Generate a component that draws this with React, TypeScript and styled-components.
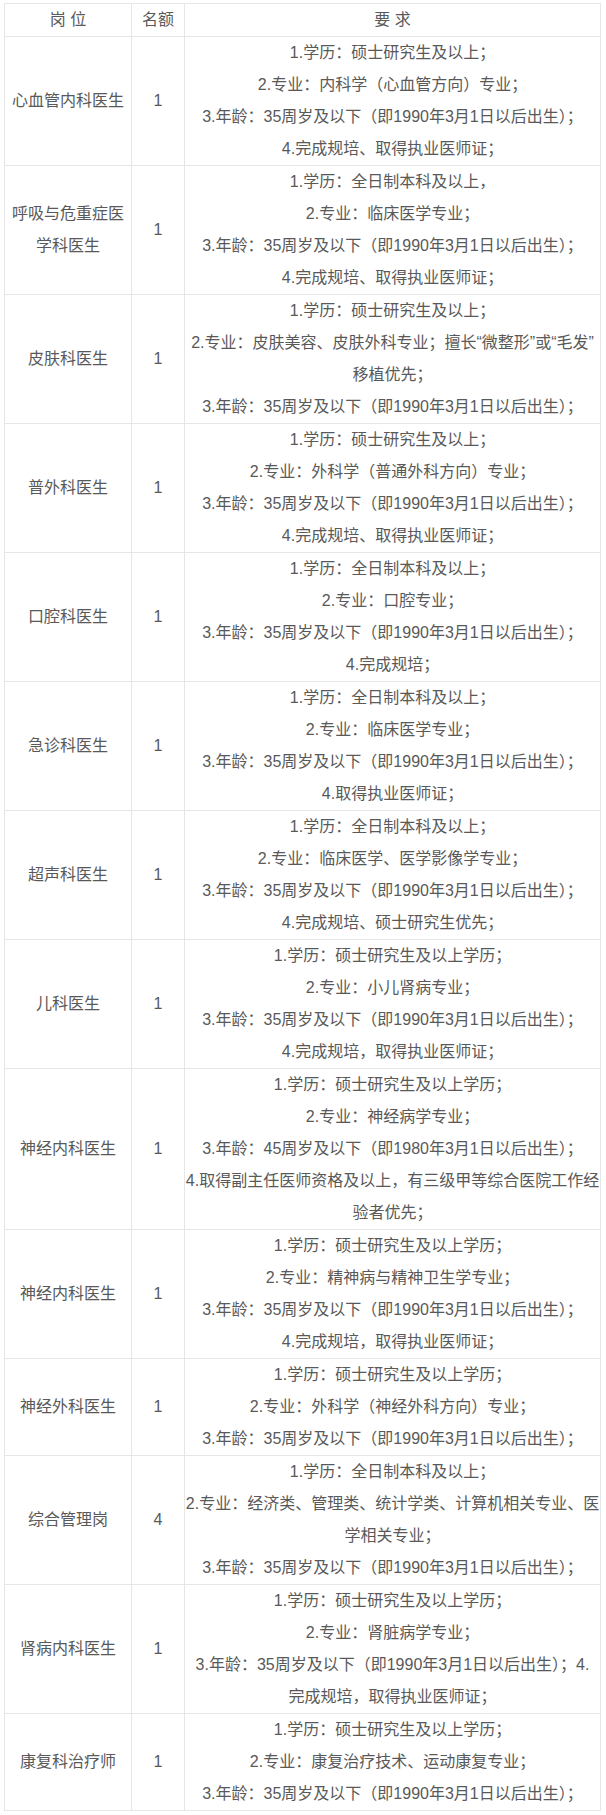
import React from "react";
import styled, { createGlobalStyle } from "styled-components";

const GlobalStyle = createGlobalStyle`
  html, body {
    margin: 0;
    padding: 0;
    background: #ffffff;
  }
  body {
    font-family: "Liberation Sans", "Noto Sans CJK SC", sans-serif;
    color: #595959;
  }
`;

type Post = {
  name: string[];
  count: string;
  reqs: string[];
};

const AGE35 = "3.年龄：35周岁及以下（即1990年3月1日以后出生）；";

const posts: Post[] = [
  {
    name: ["心血管内科医生"],
    count: "1",
    reqs: [
      "1.学历：硕士研究生及以上；",
      "2.专业：内科学（心血管方向）专业；",
      AGE35,
      "4.完成规培、取得执业医师证；",
    ],
  },
  {
    name: ["呼吸与危重症医", "学科医生"],
    count: "1",
    reqs: [
      "1.学历：全日制本科及以上，",
      "2.专业：临床医学专业；",
      AGE35,
      "4.完成规培、取得执业医师证；",
    ],
  },
  {
    name: ["皮肤科医生"],
    count: "1",
    reqs: [
      "1.学历：硕士研究生及以上；",
      "2.专业：皮肤美容、皮肤外科专业；擅长“微整形”或“毛发”",
      "移植优先；",
      AGE35,
    ],
  },
  {
    name: ["普外科医生"],
    count: "1",
    reqs: [
      "1.学历：硕士研究生及以上；",
      "2.专业：外科学（普通外科方向）专业；",
      AGE35,
      "4.完成规培、取得执业医师证；",
    ],
  },
  {
    name: ["口腔科医生"],
    count: "1",
    reqs: [
      "1.学历：全日制本科及以上；",
      "2.专业：口腔专业；",
      AGE35,
      "4.完成规培；",
    ],
  },
  {
    name: ["急诊科医生"],
    count: "1",
    reqs: [
      "1.学历：全日制本科及以上；",
      "2.专业：临床医学专业；",
      AGE35,
      "4.取得执业医师证；",
    ],
  },
  {
    name: ["超声科医生"],
    count: "1",
    reqs: [
      "1.学历：全日制本科及以上；",
      "2.专业：临床医学、医学影像学专业；",
      AGE35,
      "4.完成规培、硕士研究生优先；",
    ],
  },
  {
    name: ["儿科医生"],
    count: "1",
    reqs: [
      "1.学历：硕士研究生及以上学历；",
      "2.专业：小儿肾病专业；",
      AGE35,
      "4.完成规培，取得执业医师证；",
    ],
  },
  {
    name: ["神经内科医生"],
    count: "1",
    reqs: [
      "1.学历：硕士研究生及以上学历；",
      "2.专业：神经病学专业；",
      "3.年龄：45周岁及以下（即1980年3月1日以后出生）；",
      "4.取得副主任医师资格及以上，有三级甲等综合医院工作经",
      "验者优先；",
    ],
  },
  {
    name: ["神经内科医生"],
    count: "1",
    reqs: [
      "1.学历：硕士研究生及以上学历；",
      "2.专业：精神病与精神卫生学专业；",
      AGE35,
      "4.完成规培，取得执业医师证；",
    ],
  },
  {
    name: ["神经外科医生"],
    count: "1",
    reqs: [
      "1.学历：硕士研究生及以上学历；",
      "2.专业：外科学（神经外科方向）专业；",
      AGE35,
    ],
  },
  {
    name: ["综合管理岗"],
    count: "4",
    reqs: [
      "1.学历：全日制本科及以上；",
      "2.专业：经济类、管理类、统计学类、计算机相关专业、医",
      "学相关专业；",
      AGE35,
    ],
  },
  {
    name: ["肾病内科医生"],
    count: "1",
    reqs: [
      "1.学历：硕士研究生及以上学历；",
      "2.专业：肾脏病学专业；",
      "3.年龄：35周岁及以下（即1990年3月1日以后出生）；4.",
      "完成规培，取得执业医师证；",
    ],
  },
  {
    name: ["康复科治疗师"],
    count: "1",
    reqs: [
      "1.学历：硕士研究生及以上学历；",
      "2.专业：康复治疗技术、运动康复专业；",
      AGE35,
    ],
  },
];

const Page = styled.div`
  padding: 3px 0 0 4px;
`;

const Table = styled.div`
  display: grid;
  grid-template-columns: 127px 53px 416px;
  width: 597px;
  border-top: 1px solid #e6e6e6;
  border-left: 1px solid #e6e6e6;
  box-sizing: border-box;
`;

const Cell = styled.div`
  display: flex;
  flex-direction: column;
  justify-content: center;
  align-items: center;
  border-right: 1px solid #e6e6e6;
  border-bottom: 1px solid #e6e6e6;
  font-size: 16px;
  text-align: center;
  overflow: hidden;
`;

const Line = styled.span`
  display: block;
  line-height: 32px;
  white-space: nowrap;
`;

const App: React.FC = () => {
  return (
    <>
      <GlobalStyle />
      <Page>
        <Table>
          <Cell>
            <Line>岗 位</Line>
          </Cell>
          <Cell>
            <Line>名额</Line>
          </Cell>
          <Cell>
            <Line>要 求</Line>
          </Cell>
          {posts.map((post, index) => (
            <React.Fragment key={index}>
              <Cell>
                {post.name.map((line, i) => (
                  <Line key={i}>{line}</Line>
                ))}
              </Cell>
              <Cell>
                <Line>{post.count}</Line>
              </Cell>
              <Cell>
                {post.reqs.map((line, i) => (
                  <Line key={i}>{line}</Line>
                ))}
              </Cell>
            </React.Fragment>
          ))}
        </Table>
      </Page>
    </>
  );
};

export default App;
